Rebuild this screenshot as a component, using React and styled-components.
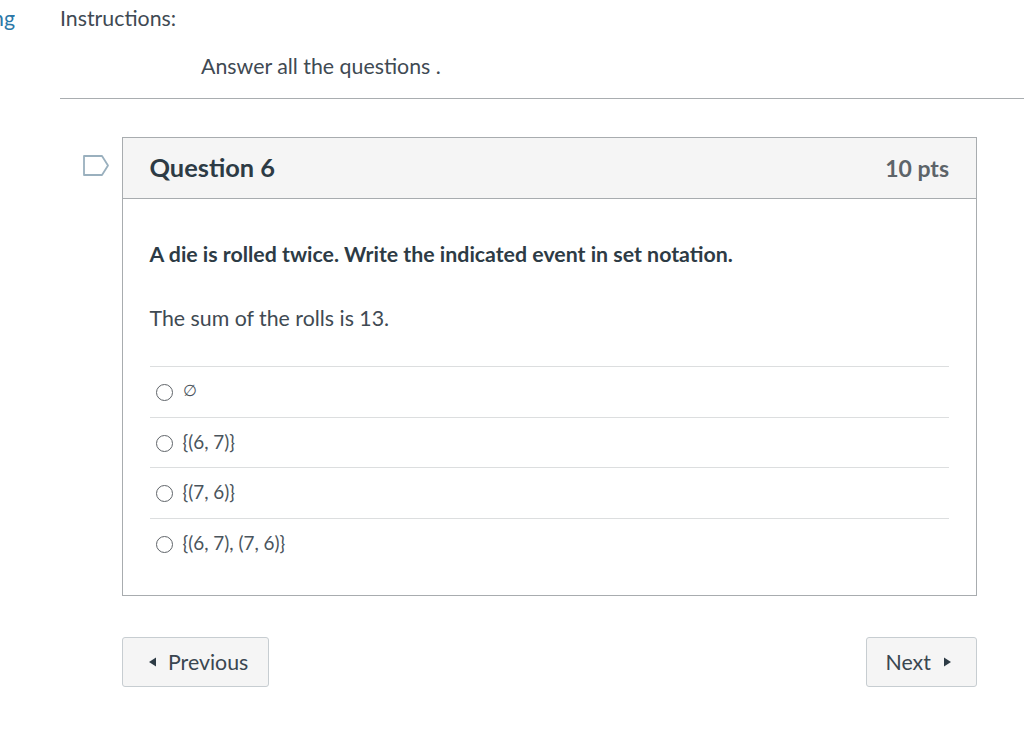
import React from "react";
import styled, { createGlobalStyle } from "styled-components";

const Global = createGlobalStyle`
  html, body { margin: 0; padding: 0; background: #fff; overflow: hidden; }
  body { font-family: Lato, "Open Sans", sans-serif; color: #2d3b45; }
`;
const Page = styled.div`display: flex; width: 1024px; height: 729px; overflow: hidden;`;
const Side = styled.div`
  width: 15px; margin-right: 45px; flex: none; display: flex; justify-content: flex-end;
  overflow: hidden; height: 36px;
`;
const SideLink = styled.a`font-size: 21.33px; line-height: 36px; color: #2b78a8; white-space: nowrap;`;
const Main = styled.main`flex: 1; min-width: 0;`;
const Label = styled.div`font-size: 21.33px; line-height: 36px; height: 36px; color: #3f4a53;`;
const InstructionText = styled.p`
  margin: 12px 0 0; padding-left: 141px; font-size: 21.33px; line-height: 36px; color: #3f4a53;
`;
const Rule = styled.hr`margin: 14px 0 0; border: 0; border-top: 1px solid #a9adb0;`;
const QuizArea = styled.div`display: flex; align-items: flex-start; padding-top: 38px;`;
const FlagCol = styled.div`width: 62px; flex: none; padding: 18px 0 0 22px; box-sizing: border-box; height: 40px;`;
const Flag = styled.svg`display: block; margin-top: -1px;`;
const Content = styled.div`width: 855px; flex: none;`;
const Card = styled.section`border: 1px solid #a8acaf; box-sizing: border-box; height: 459px;`;
const CardHead = styled.header`
  height: 61px; box-sizing: border-box; background: #f5f5f5; border-bottom: 1px solid #a8acaf;
  display: flex; justify-content: space-between; align-items: center; padding: 0 27px 0 26.5px;
`;
const QTitle = styled.h2`margin: 0 0 2px; font-size: 25.4px; font-weight: 700; color: #2d3b45;`;
const Pts = styled.span`font-size: 23px; font-weight: 700; color: #5d6469;`;
const CardBody = styled.div`padding: 37px 27px 0 26.5px;`;
const Prompt = styled.p`margin: 0; font-size: 21.33px; line-height: 36px; font-weight: 700; color: #2d3b45;`;
const Sub = styled.p`margin: 28px 0 0; font-size: 21.33px; line-height: 36px; color: #3f4a53;`;
const Answers = styled.div`margin-top: 30px;`;
const Answer = styled.label`
  display: flex; align-items: center; height: 50.6px; box-sizing: border-box; border-top: 1px solid #dcdedf;
  padding-left: 6px; gap: 10px; color: #4a545c;
`;
const Radio = styled.span`
  width: 17px; height: 17px; border-radius: 50%; border: 1.4px solid #5f6469; box-sizing: border-box;
  flex: none; background: #fff; margin-top: 2px;
`;
const AnswerText = styled.span`font-size: ${p => p.$size}px; margin-bottom: 2px;`;
const Footer = styled.nav`display: flex; justify-content: space-between; margin-top: 41px;`;
const NavButton = styled.button`
  height: 50px; box-sizing: border-box; width: ${p => p.$w}px; border: 1px solid #c7cdd1; border-radius: 3px;
  background: #f5f5f5; display: flex; align-items: center; gap: ${p => p.$gap}px;
  font: 400 21.33px Lato, sans-serif; color: #3a4650; padding: 0 0 0 ${p => p.$pad}px;
`;
const Arrow = styled.svg`width: 9px; height: 10px; fill: #2d3b45; flex: none;`;

const answers = [
  { text: "∅", size: 15.5 },
  { text: "{(6, 7)}", size: 18.9 },
  { text: "{(7, 6)}", size: 18.9 },
  { text: "{(6, 7), (7, 6)}", size: 18.9 },
];

export default function App() {
  return (
    <Page>
      <Global />
      <Side><SideLink>Pending</SideLink></Side>
      <Main>
        <Label>Instructions:</Label>
        <InstructionText>Answer all the questions .</InstructionText>
        <Rule />
        <QuizArea>
          <FlagCol>
            <Flag width="28" height="24" viewBox="0 0 28 24" fill="none">
              <path d="M2 2h18l6 9.5-6 9.5H2z" stroke="#9ab0be" strokeWidth="1.8" strokeLinejoin="round" />
            </Flag>
          </FlagCol>
          <Content>
            <Card>
              <CardHead>
                <QTitle>Question 6</QTitle>
                <Pts>10 pts</Pts>
              </CardHead>
              <CardBody>
                <Prompt>A die is rolled twice. Write the indicated event in set notation.</Prompt>
                <Sub>The sum of the rolls is 13.</Sub>
                <Answers>
                  {answers.map(a => (
                    <Answer key={a.text}><Radio /><AnswerText $size={a.size}>{a.text}</AnswerText></Answer>
                  ))}
                </Answers>
              </CardBody>
            </Card>
            <Footer>
              <NavButton $w={147} $pad={25} $gap={11}>
                <Arrow viewBox="0 0 9 10"><path d="M8 0.5v9L1 5z" /></Arrow>Previous
              </NavButton>
              <NavButton $w={111} $pad={18.5} $gap={12}>
                Next<Arrow viewBox="0 0 9 10"><path d="M1 0.5v9L8 5z" /></Arrow>
              </NavButton>
            </Footer>
          </Content>
        </QuizArea>
      </Main>
    </Page>
  );
}
